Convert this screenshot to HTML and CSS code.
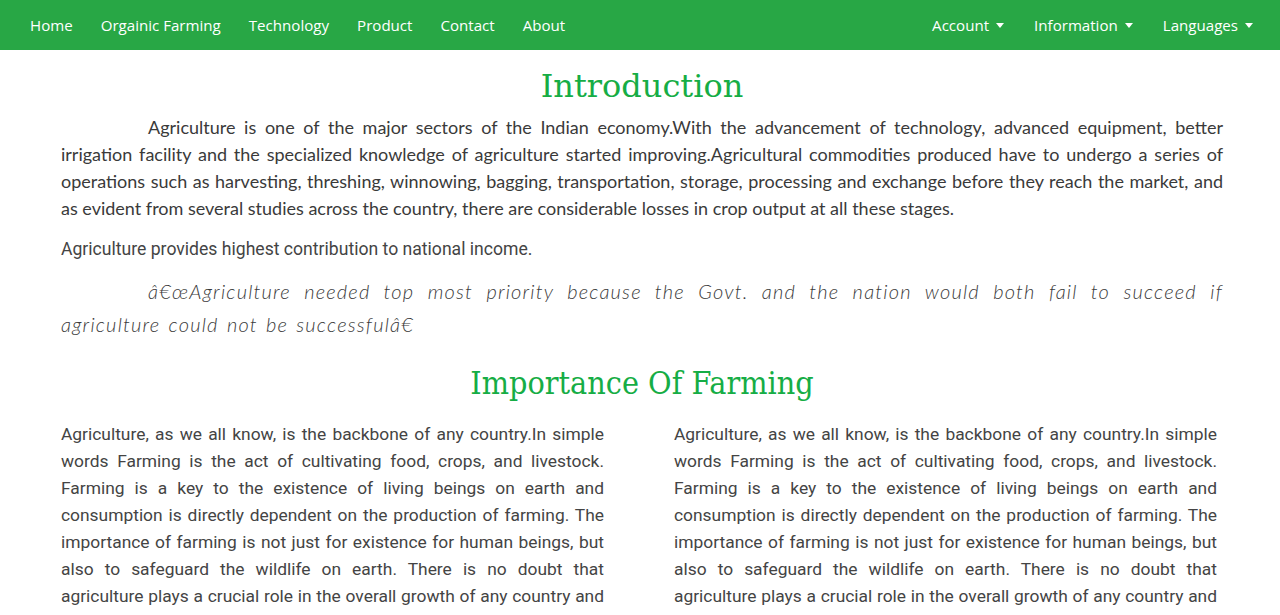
FILE: index.html
```html
<!DOCTYPE html>
<html lang="en">
<head>
<meta charset="utf-8">
<title>Farming</title>
<link rel="stylesheet" href="styles.css">
</head>
<body>
<nav class="navbar">
  <ul class="nav-list">
    <li><a class="nav-link" href="#">Home</a></li>
    <li><a class="nav-link" href="#">Orgainic Farming</a></li>
    <li><a class="nav-link" href="#">Technology</a></li>
    <li><a class="nav-link" href="#">Product</a></li>
    <li><a class="nav-link" href="#">Contact</a></li>
    <li><a class="nav-link" href="#">About</a></li>
  </ul>
  <ul class="nav-list nav-right">
    <li><a class="nav-link dropdown" href="#">Account</a></li>
    <li><a class="nav-link dropdown" href="#">Information</a></li>
    <li><a class="nav-link dropdown" href="#">Languages</a></li>
  </ul>
</nav>
<main class="content">
  <h1 class="title">Introduction</h1>
  <p class="intro">Agriculture is one of the major sectors of the Indian economy.With the advancement of technology, advanced equipment, better irrigation facility and the specialized knowledge of agriculture started improving.Agricultural commodities produced have to undergo a series of operations such as harvesting, threshing, winnowing, bagging, transportation, storage, processing and exchange before they reach the market, and as evident from several studies across the country, there are considerable losses in crop output at all these stages.</p>
  <p class="plain">Agriculture provides highest contribution to national income.</p>
  <p class="quote">â€œAgriculture needed top most priority because the Govt. and the nation would both fail to succeed if agriculture could not be successfulâ€</p>
  <h2 class="title title-2">Importance Of Farming</h2>
  <div class="columns">
    <p class="col-text">Agriculture, as we all know, is the backbone of any country.In simple words Farming is the act of cultivating food, crops, and livestock. Farming is a key to the existence of living beings on earth and consumption is directly dependent on the production of farming. The importance of farming is not just for existence for human beings, but also to safeguard the wildlife on earth. There is no doubt that agriculture plays a crucial role in the overall growth of any country and it is the main source of income for most people.</p>
    <p class="col-text">Agriculture, as we all know, is the backbone of any country.In simple words Farming is the act of cultivating food, crops, and livestock. Farming is a key to the existence of living beings on earth and consumption is directly dependent on the production of farming. The importance of farming is not just for existence for human beings, but also to safeguard the wildlife on earth. There is no doubt that agriculture plays a crucial role in the overall growth of any country and it is the main source of income for most people.</p>
  </div>
</main>
</body>
</html>
```
FILE: styles.css
```css
* { box-sizing: border-box; }
html, body { margin: 0; padding: 0; background: #fff; }
body { font-family: "Open Sans", "Noto Sans", sans-serif; color: #333; }

.navbar {
  height: 50px;
  background: #28a745;
  display: flex;
  align-items: center;
  justify-content: space-between;
  padding: 0 12px 0 16px;
}
.nav-list {
  list-style: none;
  margin: 0;
  padding: 0;
  display: flex;
  align-items: center;
}
.nav-link {
  display: block;
  color: #fff;
  text-decoration: none;
  font-size: 15.1px;
  padding: 8px 14px;
  line-height: 24px;
}
.nav-right .nav-link { padding: 8px 15px; }
.dropdown::after {
  content: "";
  display: inline-block;
  margin-left: 7px;
  vertical-align: 3px;
  border-top: 5px solid #fff;
  border-left: 4px solid transparent;
  border-right: 4px solid transparent;
}

.content {
  padding: 0 57px 0 61px;
}
.title {
  font-family: "DejaVu Serif", "Liberation Serif", serif;
  font-weight: normal;
  color: #16ad45;
  text-align: center;
  font-size: 32px;
  line-height: 40px;
  margin: 16px 0 8px;
}
.intro {
  font-family: "Lato", sans-serif;
  font-size: 18px;
  line-height: 27px;
  color: #3a3a3a;
  text-align: justify;
  text-indent: 87px;
  margin: 0;
}
.plain {
  font-family: "Roboto", sans-serif;
  font-size: 17.6px;
  line-height: 27px;
  color: #444;
  margin: 14px 0 0;
}
.quote {
  font-family: "Lato", sans-serif;
  font-style: italic;
  font-weight: 300;
  font-size: 20px;
  line-height: 33px;
  letter-spacing: 1.2px;
  word-spacing: 2px;
  color: #3a3a3a;
  text-align: justify;
  text-indent: 87px;
  margin: 12px 0 0;
}
.title-2 {
  font-family: "DejaVu Serif Condensed", "DejaVu Serif", serif;
  font-stretch: semi-condensed;
  margin: 22px 0 0;
}
.columns {
  display: grid;
  grid-template-columns: 543px 543px;
  column-gap: 70px;
  margin-top: 18px;
}
.col-text {
  font-family: "Roboto", sans-serif;
  font-size: 17.4px;
  line-height: 27px;
  color: #444;
  text-align: justify;
  margin: 0;
}
```
